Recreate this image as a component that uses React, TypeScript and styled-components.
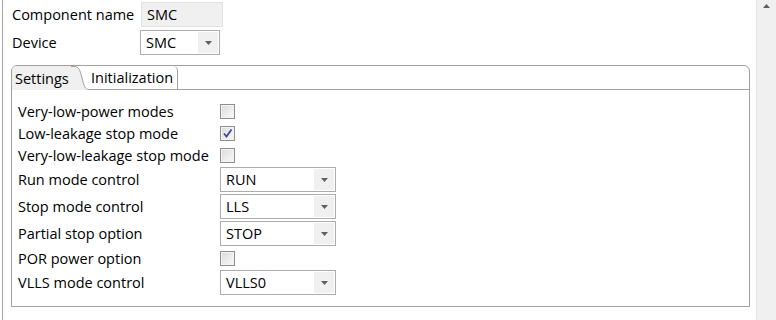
import React from 'react'
import styled, { createGlobalStyle } from 'styled-components'

const GlobalStyle = createGlobalStyle`
  body {
    margin: 0;
    background: #ffffff;
    color: #000000;
    font-family: 'Open Sans', 'Noto Sans', sans-serif;
    font-size: 14.5px;
  }
`

const Page = styled.div`
  display: flex;
  width: 776px;
  height: 320px;
  overflow: hidden;
`

const Content = styled.div`
  flex: 1;
  margin-left: 2px;
  border-left: 1px solid #a8a8a8;
  padding: 2px 6px 0 8px;
`

const Scrollbar = styled.div`
  width: 20px;
  background: #f0f0f0;
  border-left: 1px solid #e6e6e6;
  display: flex;
  justify-content: center;
  padding-top: 4px;
  box-sizing: border-box;
`

const HeaderForm = styled.div`
  display: grid;
  grid-template-columns: 128px auto;
  grid-auto-rows: 25px;
  row-gap: 3px;
  margin-left: 1px;
  align-items: center;
`

const Label = styled.span`
  white-space: nowrap;
`

const ReadOnlyField = styled.div`
  width: 82px;
  height: 25px;
  box-sizing: border-box;
  margin-left: 1px;
  background: #f0f0f0;
  border: 1px solid #e2e2e2;
  padding-left: 5px;
  display: flex;
  align-items: center;
`

const ComboBox = styled.div<{ width: number }>`
  width: ${(p) => p.width}px;
  height: 25px;
  box-sizing: border-box;
  border: 1px solid #acacac;
  background: #ffffff;
  display: flex;
  align-items: center;
  padding: 1px;
`

const ComboText = styled.span`
  flex: 1;
  padding-left: 4px;
`

const ComboButton = styled.div`
  width: 20px;
  height: 100%;
  background: #f0f0f0;
  display: flex;
  align-items: center;
  justify-content: center;
`

const Folder = styled.div`
  margin-top: 10px;
  width: 739px;
  height: 242px;
  box-sizing: border-box;
  border: 1px solid #a0a0a0;
  border-radius: 6px 6px 0 0;
  overflow: hidden;
  display: flex;
  flex-direction: column;
`

const TabRow = styled.div`
  display: flex;
  height: 24px;
`

const SelectedTab = styled.div`
  background: #f0f0f0;
  padding: 0 0 0 3px;
  display: flex;
  align-items: center;
  width: 56px;
`

const TabCurve = styled.svg`
  display: block;
  width: 18px;
  height: 24px;
`

const Tab = styled.div`
  display: flex;
  align-items: center;
  padding: 0 4px 0 2px;
  box-sizing: border-box;
  border-right: 1px solid #a0a0a0;
  border-bottom: 1px solid #a0a0a0;
  border-top-right-radius: 5px;
`

const TabFiller = styled.div`
  flex: 1;
  border-bottom: 1px solid #a0a0a0;
`

const TabBody = styled.div`
  flex: 1;
  padding: 10px 0 0 6px;
  display: grid;
  grid-template-columns: 202px auto;
  align-content: start;
`

const Cell = styled.div<{ tall?: boolean }>`
  height: ${(p) => (p.tall ? 27 : 22)}px;
  display: flex;
  align-items: center;
  white-space: nowrap;
`

const CheckBox = styled.div`
  width: 15px;
  height: 15px;
  box-sizing: border-box;
  border: 1px solid #8e8e8e;
  background: linear-gradient(135deg, #dadada 0%, #eeeeee 60%, #f7f7f7 100%);
  box-shadow: inset 0 0 0 1px #f4f4f4;
  display: flex;
  align-items: center;
  justify-content: center;
`

const Arrow = ({ up }: { up?: boolean }) => (
  <svg width="7" height="4" viewBox="0 0 7 4">
    <path d={up ? 'M0 4 L3.5 0 L7 4 Z' : 'M0 0 L7 0 L3.5 4 Z'} fill="#5f5f5f" />
  </svg>
)

const Check = ({ checked }: { checked?: boolean }) => (
  <CheckBox>
    {checked && (
      <svg width="11" height="11" viewBox="0 0 11 11">
        <path d="M2 5.5 L4.5 8.5 L9.5 1.5" stroke="#3a4c9b" strokeWidth="1.8" fill="none" />
      </svg>
    )}
  </CheckBox>
)

const Combo = ({ value, width = 116 }: { value: string; width?: number }) => (
  <ComboBox width={width}>
    <ComboText>{value}</ComboText>
    <ComboButton>
      <Arrow />
    </ComboButton>
  </ComboBox>
)

type Setting = { label: string; check?: boolean; value?: string }

const settings: Setting[] = [
  { label: 'Very-low-power modes', check: false },
  { label: 'Low-leakage stop mode', check: true },
  { label: 'Very-low-leakage stop mode', check: false },
  { label: 'Run mode control', value: 'RUN' },
  { label: 'Stop mode control', value: 'LLS' },
  { label: 'Partial stop option', value: 'STOP' },
  { label: 'POR power option', check: false },
  { label: 'VLLS mode control', value: 'VLLS0' },
]

export default function App() {
  return (
    <>
      <GlobalStyle />
      <Page>
        <Content>
          <HeaderForm>
            <Label>Component name</Label>
            <ReadOnlyField>SMC</ReadOnlyField>
            <Label>Device</Label>
            <Combo value="SMC" width={80} />
          </HeaderForm>
          <Folder>
            <TabRow>
              <SelectedTab>Settings</SelectedTab>
              <TabCurve viewBox="0 0 18 24">
                <path d="M0 0 L3 0 C8 0 9 4 11 12 C13 20 14 23.5 18 23.5 L18 24 L0 24 Z" fill="#f0f0f0" />
                <path d="M0 0.5 L3 0.5 C8 0.5 9 4 11 12 C13 20 14 23.5 18 23.5" stroke="#a0a0a0" fill="none" />
              </TabCurve>
              <Tab>Initialization</Tab>
              <TabFiller />
            </TabRow>
            <TabBody>
              {settings.map((s) => {
                const tall = s.value !== undefined
                return (
                  <React.Fragment key={s.label}>
                    <Cell tall={tall}>{s.label}</Cell>
                    <Cell tall={tall}>{tall ? <Combo value={s.value!} /> : <Check checked={s.check} />}</Cell>
                  </React.Fragment>
                )
              })}
            </TabBody>
          </Folder>
        </Content>
        <Scrollbar>
          <Arrow up />
        </Scrollbar>
      </Page>
    </>
  )
}
